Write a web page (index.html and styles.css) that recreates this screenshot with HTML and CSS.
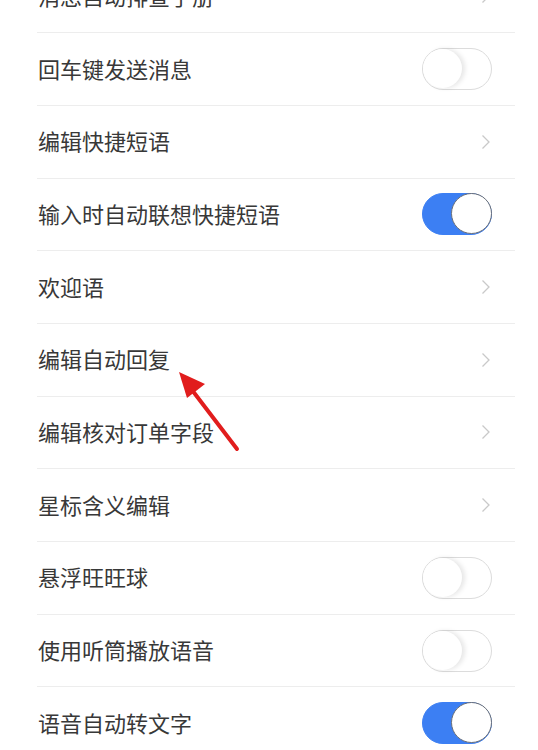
FILE: index.html
```html
<!DOCTYPE html>
<html lang="zh-CN">
<head>
<meta charset="utf-8">
<link rel="stylesheet" href="styles.css">
</head>
<body>
<div class="page">
  <ul class="list">
    <li class="row"><span class="label">消息自动排查手册</span><span class="chev"><svg width="10" height="16" viewBox="0 0 10 16"><path d="M1.5 1.5 L8 8 L1.5 14.5" fill="none" stroke="#c9c9c9" stroke-width="1.3"/></svg></span></li>
    <li class="row"><span class="label">回车键发送消息</span><span class="switch"><span class="knob"></span></span></li>
    <li class="row"><span class="label">编辑快捷短语</span><span class="chev"><svg width="10" height="16" viewBox="0 0 10 16"><path d="M1.5 1.5 L8 8 L1.5 14.5" fill="none" stroke="#c9c9c9" stroke-width="1.3"/></svg></span></li>
    <li class="row"><span class="label">输入时自动联想快捷短语</span><span class="switch on"><span class="knob"></span></span></li>
    <li class="row"><span class="label">欢迎语</span><span class="chev"><svg width="10" height="16" viewBox="0 0 10 16"><path d="M1.5 1.5 L8 8 L1.5 14.5" fill="none" stroke="#c9c9c9" stroke-width="1.3"/></svg></span></li>
    <li class="row"><span class="label">编辑自动回复</span><span class="chev"><svg width="10" height="16" viewBox="0 0 10 16"><path d="M1.5 1.5 L8 8 L1.5 14.5" fill="none" stroke="#c9c9c9" stroke-width="1.3"/></svg></span></li>
    <li class="row"><span class="label">编辑核对订单字段</span><span class="chev"><svg width="10" height="16" viewBox="0 0 10 16"><path d="M1.5 1.5 L8 8 L1.5 14.5" fill="none" stroke="#c9c9c9" stroke-width="1.3"/></svg></span></li>
    <li class="row"><span class="label">星标含义编辑</span><span class="chev"><svg width="10" height="16" viewBox="0 0 10 16"><path d="M1.5 1.5 L8 8 L1.5 14.5" fill="none" stroke="#c9c9c9" stroke-width="1.3"/></svg></span></li>
    <li class="row"><span class="label">悬浮旺旺球</span><span class="switch"><span class="knob"></span></span></li>
    <li class="row"><span class="label">使用听筒播放语音</span><span class="switch"><span class="knob"></span></span></li>
    <li class="row"><span class="label">语音自动转文字</span><span class="switch on"><span class="knob"></span></span></li>
  </ul>
  <svg class="arrow" width="538" height="750" viewBox="0 0 538 750">
    <line x1="237" y1="449" x2="192" y2="390" stroke="#e11d1d" stroke-width="4" stroke-linecap="round"/>
    <polygon points="179,372 205,384 187,398" fill="#e11d1d"/>
  </svg>
</div>
</body>
</html>
```

FILE: styles.css
```css
html, body {
  margin: 0;
  padding: 0;
  background: #ffffff;
}
.page {
  position: relative;
  width: 538px;
  height: 750px;
  overflow: hidden;
}
.list {
  list-style: none;
  margin: -39.5px 0 0 37px;
  padding: 0;
  width: 478px;
}
.row {
  height: 72.7px;
  box-sizing: border-box;
  border-bottom: 1px solid #ededed;
  display: flex;
  align-items: center;
  justify-content: space-between;
  padding: 0 23px 0 1px;
}
.label {
  font-family: "Noto Sans CJK SC", "Noto Sans", sans-serif;
  font-size: 22px;
  color: #383838;
  line-height: 1;
  margin-bottom: 3px;
}
.chev {
  display: flex;
  align-items: center;
  margin-right: 1px;
}
.switch {
  position: relative;
  width: 70px;
  height: 42px;
  box-sizing: border-box;
  border: 1.5px solid #dcdcdc;
  border-radius: 21px;
  background: #ffffff;
}
.switch .knob {
  position: absolute;
  left: 0;
  top: 0;
  width: 39px;
  height: 39px;
  border-radius: 50%;
  background: #ffffff;
  box-shadow: 3px 0 5px rgba(0, 0, 0, 0.1);
}
.switch.on {
  background: #3c7ff3;
  border-color: #3c7ff3;
}
.switch.on .knob {
  left: auto;
  right: -1px;
  top: -1px;
  width: 41px;
  height: 41px;
  box-sizing: border-box;
  border: 1.5px solid #6a6f78;
  box-shadow: none;
}
.arrow {
  position: absolute;
  left: 0;
  top: 0;
  pointer-events: none;
}
```
